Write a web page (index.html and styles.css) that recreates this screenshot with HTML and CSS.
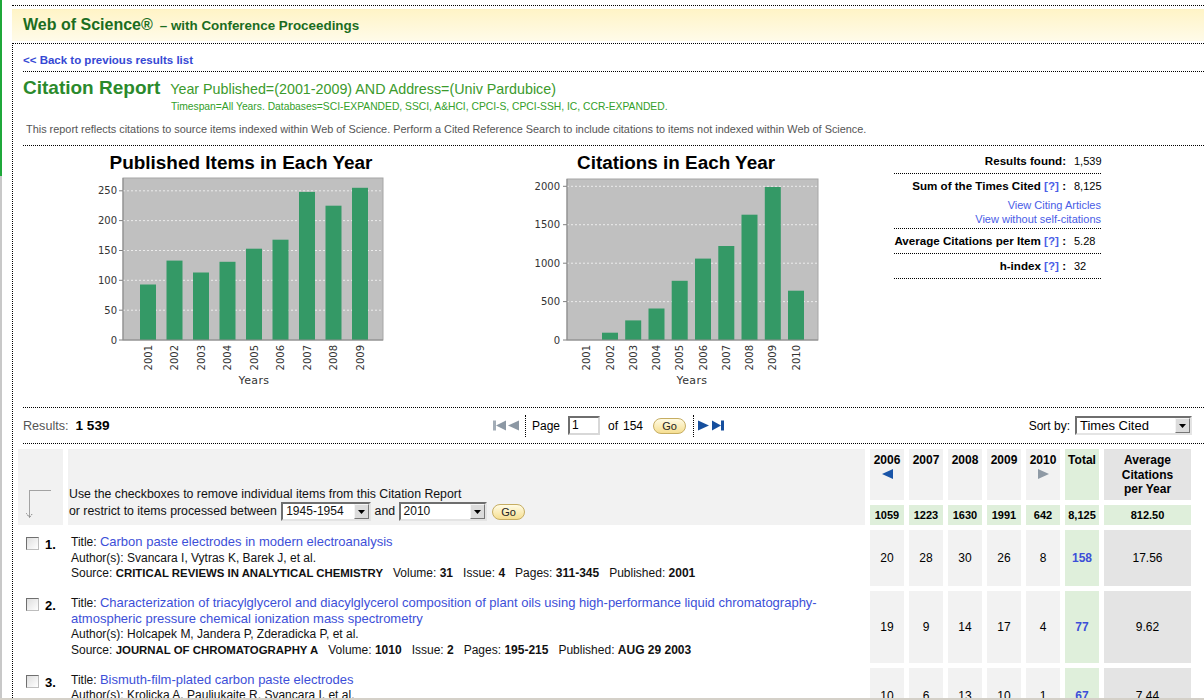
FILE: index.html
```html
<!DOCTYPE html>
<html>
<head>
<meta charset="utf-8">
<title>Citation Report</title>
<link rel="stylesheet" href="styles.css">
</head>
<body>
<div class="window">
  <div class="strip"></div>
  <div class="page">
    <div class="topline"></div>
    <div class="banner"><span class="wos">Web of Science®</span><span class="wos-sub">– with Conference Proceedings</span></div>
    <div class="content">
      <div class="back"><a href="#">&lt;&lt; Back to previous results list</a></div>
      <div class="report-head">
        <div class="title-line"><span class="ctitle">Citation Report</span><span class="query">Year Published=(2001-2009) AND Address=(Univ Pardubice)</span></div>
        <div class="timespan">Timespan=All Years. Databases=SCI-EXPANDED, SSCI, A&amp;HCI, CPCI-S, CPCI-SSH, IC, CCR-EXPANDED.</div>
        <p class="note">This report reflects citations to source items indexed within Web of Science. Perform a Cited Reference Search to include citations to items not indexed within Web of Science.</p>
      </div>

      <div class="charts">
        <svg class="chart chart-pub" width="300" height="245" viewBox="0 0 300 245">
          <text class="ch-title" x="148" y="22" text-anchor="middle" textLength="263" lengthAdjust="spacingAndGlyphs">Published Items in Each Year</text>
          <rect class="plot" x="30" y="31" width="260" height="162"/>
          <g class="grid">
            <line x1="30" x2="290" y1="163.2" y2="163.2"/>
            <line x1="30" x2="290" y1="133.3" y2="133.3"/>
            <line x1="30" x2="290" y1="103.5" y2="103.5"/>
            <line x1="30" x2="290" y1="73.6" y2="73.6"/>
            <line x1="30" x2="290" y1="43.8" y2="43.8"/>
          </g>
          <g class="ticks">
            <line x1="26" x2="30" y1="193" y2="193"/>
            <line x1="26" x2="30" y1="163.2" y2="163.2"/>
            <line x1="26" x2="30" y1="133.3" y2="133.3"/>
            <line x1="26" x2="30" y1="103.5" y2="103.5"/>
            <line x1="26" x2="30" y1="73.6" y2="73.6"/>
            <line x1="26" x2="30" y1="43.8" y2="43.8"/>
          </g>
          <g class="ylab">
            <text x="24" y="196.5">0</text>
            <text x="24" y="166.7">50</text>
            <text x="24" y="136.8">100</text>
            <text x="24" y="107">150</text>
            <text x="24" y="77.1">200</text>
            <text x="24" y="47.3">250</text>
          </g>
          <g class="bars">
            <rect x="47" y="137.5" width="16" height="55.5"/>
            <rect x="73.5" y="113.6" width="16" height="79.4"/>
            <rect x="100" y="125.5" width="16" height="67.5"/>
            <rect x="126.5" y="114.8" width="16" height="78.2"/>
            <rect x="153" y="101.7" width="16" height="91.3"/>
            <rect x="179.5" y="92.7" width="16" height="100.3"/>
            <rect x="206" y="44.9" width="16" height="148.1"/>
            <rect x="232.5" y="58.7" width="16" height="134.3"/>
            <rect x="259" y="40.8" width="16" height="152.2"/>
          </g>
          <line class="axis" x1="30" x2="30" y1="31" y2="193"/>
          <line class="axis" x1="30" x2="290" y1="193" y2="193"/>
          <g class="xlab">
            <text transform="translate(58.6 198) rotate(-90)">2001</text>
            <text transform="translate(85.1 198) rotate(-90)">2002</text>
            <text transform="translate(111.6 198) rotate(-90)">2003</text>
            <text transform="translate(138.1 198) rotate(-90)">2004</text>
            <text transform="translate(164.6 198) rotate(-90)">2005</text>
            <text transform="translate(191.1 198) rotate(-90)">2006</text>
            <text transform="translate(217.6 198) rotate(-90)">2007</text>
            <text transform="translate(244.1 198) rotate(-90)">2008</text>
            <text transform="translate(270.6 198) rotate(-90)">2009</text>
          </g>
          <text class="axis-title" x="161" y="237" text-anchor="middle">Years</text>
        </svg>

        <svg class="chart chart-cit" width="300" height="245" viewBox="0 0 300 245">
          <text class="ch-title" x="151" y="22" text-anchor="middle" textLength="198" lengthAdjust="spacingAndGlyphs">Citations in Each Year</text>
          <rect class="plot" x="42" y="32" width="251" height="161"/>
          <g class="grid">
            <line x1="42" x2="293" y1="154.6" y2="154.6"/>
            <line x1="42" x2="293" y1="116.2" y2="116.2"/>
            <line x1="42" x2="293" y1="77.7" y2="77.7"/>
            <line x1="42" x2="293" y1="39.3" y2="39.3"/>
          </g>
          <g class="ticks">
            <line x1="38" x2="42" y1="193" y2="193"/>
            <line x1="38" x2="42" y1="154.6" y2="154.6"/>
            <line x1="38" x2="42" y1="116.2" y2="116.2"/>
            <line x1="38" x2="42" y1="77.7" y2="77.7"/>
            <line x1="38" x2="42" y1="39.3" y2="39.3"/>
          </g>
          <g class="ylab">
            <text x="35" y="196.5">0</text>
            <text x="35" y="158.1">500</text>
            <text x="35" y="119.7">1000</text>
            <text x="35" y="81.2">1500</text>
            <text x="35" y="42.8">2000</text>
          </g>
          <g class="bars">
            <rect x="77" y="185.7" width="16" height="7.3"/>
            <rect x="100.2" y="173.4" width="16" height="19.6"/>
            <rect x="123.5" y="161.5" width="16" height="31.5"/>
            <rect x="146.7" y="133.8" width="16" height="59.2"/>
            <rect x="170" y="111.6" width="16" height="81.4"/>
            <rect x="193.3" y="99" width="16" height="94"/>
            <rect x="216.5" y="67.7" width="16" height="125.3"/>
            <rect x="239.8" y="40" width="16" height="153"/>
            <rect x="263" y="143.7" width="16" height="49.3"/>
          </g>
          <line class="axis" x1="42" x2="42" y1="32" y2="193"/>
          <line class="axis" x1="42" x2="293" y1="193" y2="193"/>
          <g class="xlab">
            <text transform="translate(65.3 198) rotate(-90)">2001</text>
            <text transform="translate(88.6 198) rotate(-90)">2002</text>
            <text transform="translate(111.8 198) rotate(-90)">2003</text>
            <text transform="translate(135.1 198) rotate(-90)">2004</text>
            <text transform="translate(158.3 198) rotate(-90)">2005</text>
            <text transform="translate(181.6 198) rotate(-90)">2006</text>
            <text transform="translate(204.9 198) rotate(-90)">2007</text>
            <text transform="translate(228.1 198) rotate(-90)">2008</text>
            <text transform="translate(251.4 198) rotate(-90)">2009</text>
            <text transform="translate(274.6 198) rotate(-90)">2010</text>
          </g>
          <text class="axis-title" x="167" y="237" text-anchor="middle">Years</text>
        </svg>

        <div class="stats">
          <div class="stat first">
            <span class="lbl">Results found:</span><span class="val">1,539</span>
          </div>
          <div class="stat">
            <span class="lbl">Sum of the Times Cited <a href="#">[?]</a> :</span><span class="val">8,125</span>
            <div class="links"><a href="#">View Citing Articles</a><a href="#">View without self-citations</a></div>
          </div>
          <div class="stat">
            <span class="lbl">Average Citations per Item <a href="#">[?]</a> :</span><span class="val">5.28</span>
          </div>
          <div class="stat">
            <span class="lbl">h-index <a href="#">[?]</a> :</span><span class="val">32</span>
          </div>
        </div>
      </div>

      <div class="pager">
        <div class="pg-left"><span class="res-lbl">Results:</span><span class="res-num">1 539</span></div>
        <div class="pg-center">
          <svg class="ic-first" width="13" height="11" viewBox="0 0 13 11"><rect x="0" y="0.5" width="3" height="10" fill="#a3adb7"/><polygon points="13,0.5 3,5.5 13,10.5" fill="#8c98a4"/></svg>
          <svg class="ic-prev" width="11" height="11" viewBox="0 0 11 11"><polygon points="11,0.5 0,5.5 11,10.5" fill="#8c98a4"/></svg>
          <span class="vsep"></span>
          <span class="pg-word">Page</span>
          <span class="pg-input">1</span>
          <span class="pg-of">of</span><span class="pg-total">154</span>
          <span class="go">Go</span>
          <span class="vsep vsep2"></span>
          <svg class="ic-next" width="11" height="11" viewBox="0 0 11 11"><polygon points="0,0.5 11,5.5 0,10.5" fill="#164f9e"/></svg>
          <svg class="ic-last" width="12" height="11" viewBox="0 0 12 11"><polygon points="0,0.5 9,5.5 0,10.5" fill="#164f9e"/><rect x="9" y="0.5" width="3" height="10" fill="#164f9e"/></svg>
        </div>
        <div class="pg-right">
          <span class="sort-lbl">Sort by:</span>
          <span class="select sort-sel"><span class="sel-text">Times Cited</span><span class="dd"><svg width="7" height="4" viewBox="0 0 7 4"><polygon points="0,0 7,0 3.5,4" fill="#000"/></svg></span></span>
        </div>
      </div>

      <div class="rtable">
        <div class="hc1">
          <svg width="45" height="76" viewBox="0 0 45 76"><path d="M32.5 41.5 H11.5 V68" fill="none" stroke="#555" stroke-width="1" stroke-dasharray="1 1"/><path d="M8.5 64.5 L11.5 68.5 L14.5 64.5" fill="none" stroke="#555" stroke-width="1" stroke-dasharray="1 1"/></svg>
        </div>
        <div class="hc2">
          <div class="hline">Use the checkboxes to remove individual items from this Citation Report</div>
          <div class="hline2">or restrict to items processed between <span class="select sel-a"><span class="sel-text">1945-1954</span><span class="dd"><svg width="7" height="4" viewBox="0 0 7 4"><polygon points="0,0 7,0 3.5,4" fill="#000"/></svg></span></span> and <span class="select sel-b"><span class="sel-text">2010</span><span class="dd"><svg width="7" height="4" viewBox="0 0 7 4"><polygon points="0,0 7,0 3.5,4" fill="#000"/></svg></span></span> <span class="go go-small">Go</span></div>
        </div>
        <div class="yh">2006<svg class="yarrow" width="11" height="10" viewBox="0 0 11 10"><polygon points="11,0 0,5 11,10" fill="#1a55a8"/></svg></div>
        <div class="yh">2007</div>
        <div class="yh">2008</div>
        <div class="yh">2009</div>
        <div class="yh">2010<svg class="yarrow" width="11" height="10" viewBox="0 0 11 10"><polygon points="0,0 11,5 0,10" fill="#8f9aa5"/></svg></div>
        <div class="yh yh-total">Total</div>
        <div class="yh yh-avg">Average<br>Citations<br>per Year</div>

        <div class="tt">1059</div>
        <div class="tt">1223</div>
        <div class="tt">1630</div>
        <div class="tt">1991</div>
        <div class="tt">642</div>
        <div class="tt">8,125</div>
        <div class="tt">812.50</div>

        <div class="c1"><span class="cb"></span><span class="idx">1.</span></div>
        <div class="c2">
          <div>Title: <a href="#">Carbon paste electrodes in modern electroanalysis</a></div>
          <div>Author(s): Svancara I, Vytras K, Barek J, et al.</div>
          <div class="src"><span>Source: <b class="jn">CRITICAL REVIEWS IN ANALYTICAL CHEMISTRY</b></span><span>Volume: <b>31</b></span><span>Issue: <b>4</b></span><span>Pages: <b>311-345</b></span><span>Published: <b>2001</b></span></div>
        </div>
        <div class="n">20</div><div class="n">28</div><div class="n">30</div><div class="n">26</div><div class="n">8</div><div class="n tot"><a href="#">158</a></div><div class="n avg">17.56</div>

        <div class="c1"><span class="cb"></span><span class="idx">2.</span></div>
        <div class="c2">
          <div>Title: <a href="#">Characterization of triacylglycerol and diacylglycerol composition of plant oils using high-performance liquid chromatography-<br>atmospheric pressure chemical ionization mass spectrometry</a></div>
          <div>Author(s): Holcapek M, Jandera P, Zderadicka P, et al.</div>
          <div class="src"><span>Source: <b class="jn">JOURNAL OF CHROMATOGRAPHY A</b></span><span>Volume: <b>1010</b></span><span>Issue: <b>2</b></span><span>Pages: <b>195-215</b></span><span>Published: <b>AUG 29 2003</b></span></div>
        </div>
        <div class="n">19</div><div class="n">9</div><div class="n">14</div><div class="n">17</div><div class="n">4</div><div class="n tot"><a href="#">77</a></div><div class="n avg">9.62</div>

        <div class="c1"><span class="cb"></span><span class="idx">3.</span></div>
        <div class="c2">
          <div>Title: <a href="#">Bismuth-film-plated carbon paste electrodes</a></div>
          <div>Author(s): Krolicka A, Pauliukaite R, Svancara I, et al.</div>
          <div class="src"><span>Source: <b class="jn">ELECTROCHEMISTRY COMMUNICATIONS</b></span><span>Volume: <b>4</b></span><span>Issue: <b>3</b></span><span>Pages: <b>193-196</b></span><span>Published: <b>MAR 2002</b></span></div>
        </div>
        <div class="n">10</div><div class="n">6</div><div class="n">13</div><div class="n">10</div><div class="n">1</div><div class="n tot"><a href="#">67</a></div><div class="n avg">7.44</div>
      </div>
    </div>
  </div>
</div>
</body>
</html>
```

FILE: styles.css
```css
html, body {
  margin: 0;
  padding: 0;
  background: #fff;
}
body {
  font-family: "Liberation Sans", Arial, sans-serif;
  color: #000;
}
a { text-decoration: none; }

.window {
  display: flex;
  height: 700px;
  box-sizing: border-box;
  border-bottom: 2px solid #d4d0c8;
  overflow: hidden;
}
.strip {
  flex: 0 0 2px;
  background: linear-gradient(to bottom, #1fa83a 0, #1fa83a 176px, #c8c8c8 176px, #c8c8c8 100%);
}
.page {
  flex: 1;
  min-width: 0;
  margin-left: 10px;
}
.topline {
  height: 5px;
  border-bottom: 1px dotted #000;
}
.banner {
  margin-top: 3px;
  height: 32px;
  line-height: 32px;
  padding-left: 11px;
  background: linear-gradient(to bottom, #fff4c6, #fffbe9);
  white-space: nowrap;
}
.wos {
  font-size: 16px;
  font-weight: bold;
  color: #1b6d1f;
}
.wos-sub {
  font-size: 13.4px;
  font-weight: bold;
  color: #1b6d1f;
  margin-left: 7px;
}
.content {
  margin-top: 2px;
  border-top: 1px dotted #000;
  border-left: 1px dotted #000;
  padding-left: 10px;
  height: 700px;
}
.back {
  padding: 10px 0 4px;
  line-height: 13px;
  font-size: 11.5px;
  font-weight: bold;
  border-bottom: 1px dotted #000;
}
.back a { color: #3548d4; }

.report-head {
  padding: 4px 0 10px;
  border-bottom: 1px dotted #000;
}
.title-line {
  height: 24px;
  line-height: 24px;
  white-space: nowrap;
}
.ctitle {
  font-size: 19px;
  font-weight: bold;
  color: #2a8a2c;
}
.query {
  font-size: 14.3px;
  color: #3b9a2c;
  margin-left: 10px;
}
.timespan {
  margin-top: 1px;
  padding-left: 148px;
  font-size: 10.3px;
  line-height: 12px;
  color: #33a02a;
}
.note {
  margin: 10px 0 0 3px;
  font-size: 10.9px;
  line-height: 12px;
  color: #555;
  white-space: nowrap;
}

/* charts */
.charts {
  display: flex;
  height: 261px;
  padding-left: 70px;
}
.chart {
  flex: 0 0 auto;
  margin-top: 1px;
  display: block;
}
.chart-pub { margin-right: 132px; }
.chart-cit { margin-right: 69px; }
.ch-title {
  font-family: "Liberation Sans", Arial, sans-serif;
  font-weight: bold;
  font-size: 18px;
  fill: #000;
}
.plot { fill: #c0c0c0; stroke: #a6a6a6; stroke-width: 1; }
.grid line { stroke: #ececec; stroke-width: 1; stroke-dasharray: 2 2; }
.ticks line { stroke: #808080; stroke-width: 1; }
.axis { stroke: #8a8a8a; stroke-width: 1; }
.ylab text {
  font-family: "DejaVu Sans", sans-serif;
  font-size: 10px;
  fill: #333;
  text-anchor: end;
}
.xlab text {
  font-family: "DejaVu Sans", sans-serif;
  font-size: 10px;
  fill: #333;
  text-anchor: end;
}
.bars rect { fill: #349966; }
.axis-title {
  font-family: "DejaVu Sans", sans-serif;
  font-size: 11px;
  letter-spacing: 0.4px;
  fill: #333;
}

/* stats */
.stats {
  flex: 0 0 207px;
  font-size: 11px;
}
.stat {
  display: grid;
  grid-template-columns: 1fr 27px;
  column-gap: 8px;
  line-height: 14px;
  padding: 5px 0 5px;
  border-bottom: 1px dotted #000;
}
.stat.first { padding-top: 8px; }
.lbl {
  text-align: right;
  font-weight: bold;
  font-size: 11.6px;
  white-space: nowrap;
}
.lbl a { color: #4a5de6; font-weight: bold; }
.val { white-space: nowrap; }
.links {
  grid-column: 1 / -1;
  display: flex;
  flex-direction: column;
  align-items: flex-end;
  margin-top: 5px;
  margin-bottom: -3px;
}
.links a { color: #4a5de6; }

/* pager */
.pager {
  display: grid;
  grid-template-columns: 1fr auto 1fr;
  align-items: center;
  height: 35px;
  border-top: 1px dotted #000;
  border-bottom: 1px dotted #000;
  font-size: 12px;
}
.pg-left { white-space: nowrap; }
.res-lbl { color: #555; font-size: 12.6px; }
.res-num { font-weight: bold; font-size: 13.6px; margin-left: 7px; }
.pg-center {
  display: flex;
  align-items: center;
  margin-right: 10px;
  white-space: nowrap;
}
.ic-prev { margin-left: 2px; }
.vsep {
  display: block;
  width: 0;
  height: 22px;
  border-left: 1px dotted #000;
  margin-left: 6px;
}
.pg-word { margin-left: 6px; }
.pg-input {
  margin-left: 8px;
  width: 32px;
  height: 19px;
  box-sizing: border-box;
  border: 2px solid;
  border-color: #6e6e6e #d8d8d8 #d8d8d8 #6e6e6e;
  background: #fff;
  line-height: 15px;
  padding-left: 2px;
}
.pg-of { margin-left: 8px; }
.pg-total { margin-left: 5px; }
.go {
  display: inline-block;
  margin-left: 10px;
  width: 33px;
  height: 16px;
  box-sizing: border-box;
  border: 1px solid #c6ad62;
  border-radius: 8px;
  background: linear-gradient(to bottom, #fffbe4, #f6df92);
  font-size: 11px;
  line-height: 14px;
  text-align: center;
  color: #222;
}
.vsep2 { margin-left: 7px; }
.ic-next { margin-left: 4px; }
.ic-last { margin-left: 3px; }
.pg-right {
  justify-self: end;
  display: flex;
  align-items: center;
  margin-right: 12px;
  white-space: nowrap;
}
.sort-lbl { margin-right: 5px; }
.select {
  display: inline-flex;
  align-items: center;
  box-sizing: border-box;
  height: 19px;
  border: 2px solid;
  border-color: #6e6e6e #e4e4e4 #e4e4e4 #6e6e6e;
  background: #fff;
  font-size: 12px;
  vertical-align: middle;
}
.sel-text { flex: 1; padding-left: 3px; line-height: 15px; }
.sort-sel .sel-text { font-size: 13px; }
.dd {
  width: 15px;
  height: 15px;
  box-sizing: border-box;
  background: #dcdcdc;
  border: 1px solid;
  border-color: #f4f4f4 #777 #777 #f4f4f4;
  display: flex;
  align-items: center;
  justify-content: center;
}
.sort-sel { width: 117px; }
.sel-a { width: 90px; margin-left: 1px; }
.sel-b { width: 88px; }

/* results table */
.rtable {
  margin: 5px 13px 0 -5px;
  display: grid;
  grid-template-columns: 45px 1fr repeat(6, 34px) 87px;
  column-gap: 5px;
  row-gap: 5px;
  font-size: 12px;
}
.hc1, .hc2 {
  grid-row: span 2;
  background: #f2f2f2;
}
.hc1 svg { display: block; }
.hc2 {
  display: flex;
  flex-direction: column;
  justify-content: flex-end;
  padding: 0 0 4px 1px;
  color: #111;
  white-space: nowrap;
  font-size: 12.3px;
}
.hline { line-height: 14px; margin-bottom: 1px; }
.hline2 { line-height: 19px; }
.go-small { margin-left: 2px; vertical-align: middle; }
.yh {
  height: 51px;
  box-sizing: border-box;
  background: #f2f2f2;
  padding-top: 4px;
  font-weight: bold;
  text-align: center;
  line-height: 14.5px;
  display: flex;
  flex-direction: column;
  align-items: center;
}
.yh-avg { display: block; }
.yarrow { margin-top: 1px; }
.yh-total { background: #dfefdb; }
.yh-avg { background: #e4e4e4; }
.tt {
  height: 20px;
  background: #dfefdb;
  font-size: 11px;
  font-weight: bold;
  display: flex;
  align-items: center;
  justify-content: center;
}
.c1 {
  display: flex;
  align-items: flex-start;
  padding: 7px 0 0 8px;
}
.cb {
  display: block;
  width: 13px;
  height: 13px;
  box-sizing: border-box;
  border: 1px solid #6f6f6f;
  border-right-color: #bdbdbd;
  border-bottom-color: #bdbdbd;
  background: linear-gradient(135deg, #dedede, #ffffff);
  flex: 0 0 auto;
}
.idx {
  margin-left: 6px;
  font-weight: bold;
  font-size: 13px;
  line-height: 16px;
}
.c2 {
  padding: 5px 0 4.5px 3px;
  line-height: 15.5px;
  color: #111;
  white-space: nowrap;
}
.c2 a { color: #3d4fd8; font-size: 13px; line-height: 13px; }
.src span { margin-right: 10px; }
.src b.jn { font-size: 11.4px; line-height: 12px; }
.n {
  background: #f2f2f2;
  display: flex;
  align-items: center;
  justify-content: center;
}
.tot { background: #dfefdb; }
.tot a { color: #3d4fd8; font-weight: bold; }
.avg { background: #e4e4e4; }
```
